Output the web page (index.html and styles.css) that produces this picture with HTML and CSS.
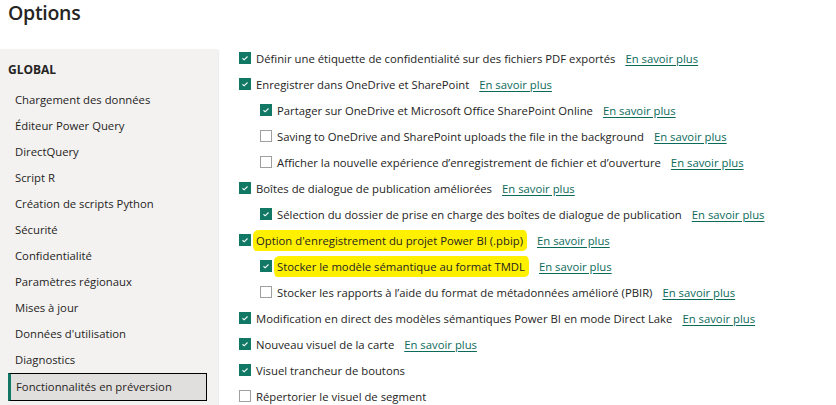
FILE: index.html
```html
<!DOCTYPE html>
<html lang="fr">
<head>
<meta charset="utf-8">
<title>Options</title>
<link rel="stylesheet" href="styles.css">
</head>
<body>
<h1 class="title">Options</h1>
<div class="main">
  <nav class="sidebar">
    <div class="group">GLOBAL</div>
    <ul class="nav">
      <li class="nav-item">Chargement des données</li>
      <li class="nav-item">Éditeur Power Query</li>
      <li class="nav-item">DirectQuery</li>
      <li class="nav-item">Script R</li>
      <li class="nav-item">Création de scripts Python</li>
      <li class="nav-item">Sécurité</li>
      <li class="nav-item">Confidentialité</li>
      <li class="nav-item">Paramètres régionaux</li>
      <li class="nav-item">Mises à jour</li>
      <li class="nav-item">Données d'utilisation</li>
      <li class="nav-item">Diagnostics</li>
      <li class="nav-item selected">Fonctionnalités en préversion</li>
    </ul>
  </nav>
  <section class="content">
    <div class="row"><span class="cb on"><svg viewBox="0 0 12 12"><path d="M3 6.3 L5 8.2 L9 4.2"/></svg></span><span class="label">Définir une étiquette de confidentialité sur des fichiers PDF exportés</span><a class="link">En savoir plus</a></div>
    <div class="row"><span class="cb on"><svg viewBox="0 0 12 12"><path d="M3 6.3 L5 8.2 L9 4.2"/></svg></span><span class="label">Enregistrer dans OneDrive et SharePoint</span><a class="link">En savoir plus</a></div>
    <div class="row sub"><span class="cb on"><svg viewBox="0 0 12 12"><path d="M3 6.3 L5 8.2 L9 4.2"/></svg></span><span class="label">Partager sur OneDrive et Microsoft Office SharePoint Online</span><a class="link">En savoir plus</a></div>
    <div class="row sub"><span class="cb"></span><span class="label">Saving to OneDrive and SharePoint uploads the file in the background</span><a class="link">En savoir plus</a></div>
    <div class="row sub"><span class="cb"></span><span class="label">Afficher la nouvelle expérience d’enregistrement de fichier et d’ouverture</span><a class="link">En savoir plus</a></div>
    <div class="row"><span class="cb on"><svg viewBox="0 0 12 12"><path d="M3 6.3 L5 8.2 L9 4.2"/></svg></span><span class="label">Boîtes de dialogue de publication améliorées</span><a class="link">En savoir plus</a></div>
    <div class="row sub"><span class="cb on"><svg viewBox="0 0 12 12"><path d="M3 6.3 L5 8.2 L9 4.2"/></svg></span><span class="label">Sélection du dossier de prise en charge des boîtes de dialogue de publication</span><a class="link">En savoir plus</a></div>
    <div class="row"><span class="cb on"><svg viewBox="0 0 12 12"><path d="M3 6.3 L5 8.2 L9 4.2"/></svg></span><span class="label mark">Option d'enregistrement du projet Power BI (.pbip)</span><a class="link">En savoir plus</a></div>
    <div class="row sub"><span class="cb on"><svg viewBox="0 0 12 12"><path d="M3 6.3 L5 8.2 L9 4.2"/></svg></span><span class="label mark">Stocker le modèle sémantique au format TMDL</span><a class="link">En savoir plus</a></div>
    <div class="row sub"><span class="cb"></span><span class="label">Stocker les rapports à l’aide du format de métadonnées amélioré (PBIR)</span><a class="link">En savoir plus</a></div>
    <div class="row"><span class="cb on"><svg viewBox="0 0 12 12"><path d="M3 6.3 L5 8.2 L9 4.2"/></svg></span><span class="label">Modification en direct des modèles sémantiques Power BI en mode Direct Lake</span><a class="link">En savoir plus</a></div>
    <div class="row"><span class="cb on"><svg viewBox="0 0 12 12"><path d="M3 6.3 L5 8.2 L9 4.2"/></svg></span><span class="label">Nouveau visuel de la carte</span><a class="link">En savoir plus</a></div>
    <div class="row"><span class="cb on"><svg viewBox="0 0 12 12"><path d="M3 6.3 L5 8.2 L9 4.2"/></svg></span><span class="label">Visuel trancheur de boutons</span></div>
    <div class="row"><span class="cb"></span><span class="label">Répertorier le visuel de segment</span></div>
  </section>
</div>
</body>
</html>
```
FILE: styles.css
```css
html, body {
  margin: 0;
  padding: 0;
  background: #ffffff;
  overflow: hidden;
}
body {
  font-family: "Open Sans", "Noto Sans", sans-serif;
  font-size: 11.3px;
  color: #252423;
  width: 836px;
  height: 405px;
}
.title {
  margin: 0;
  padding: 0 0 0 8px;
  height: 45px;
  font-size: 19.5px;
  font-weight: 600;
  letter-spacing: -0.3px;
  line-height: 26px;
  color: #252423;
}
.main {
  display: flex;
  align-items: flex-start;
}
.sidebar {
  width: 218px;
  flex: none;
  margin-top: 4px;
  height: 360px;
  background: #f3f2f1;
  border-top-right-radius: 3px;
  box-shadow: 1px 0 1px rgba(0,0,0,0.08);
  padding-top: 8px;
}
.group {
  height: 26px;
  line-height: 26px;
  padding-left: 8px;
  font-weight: 700;
  font-size: 12px;
  margin-bottom: 4px;
}
.nav {
  list-style: none;
  margin: 0;
  padding: 0;
}
.nav-item {
  height: 26px;
  line-height: 26px;
  padding-left: 15px;
  white-space: nowrap;
}
.nav-item.selected {
  margin: 0 11px 0 8px;
  height: 26px;
  padding-left: 5px;
  background: #e1dfdd;
  border: 1px solid #000;
  border-left: 3px solid #117865;
}
.content {
  padding-left: 21px;
  flex: 1;
}
.row {
  height: 26px;
  display: flex;
  align-items: center;
  white-space: nowrap;
}
.row.sub {
  padding-left: 21px;
}
.cb {
  width: 12px;
  height: 12px;
  box-sizing: border-box;
  border: 1px solid #a19f9d;
  background: #fff;
  margin-right: 5px;
  flex: none;
  display: flex;
}
.cb.on {
  background: #117865;
  border-color: #117865;
}
.cb svg {
  width: 10px;
  height: 10px;
  fill: none;
  stroke: #fff;
  stroke-width: 1.3;
}
.label {
  padding: 0;
}
.label.mark {
  background: #fff000;
  margin-left: -3px;
  padding: 3px 4px 3px 3px;
  border-radius: 6px 3px 5px 3px / 5px 6px 4px 6px;
}
.link {
  margin-left: 10px;
  color: #0b6a5a;
  text-decoration: underline;
  text-underline-offset: 2px;
}
```
